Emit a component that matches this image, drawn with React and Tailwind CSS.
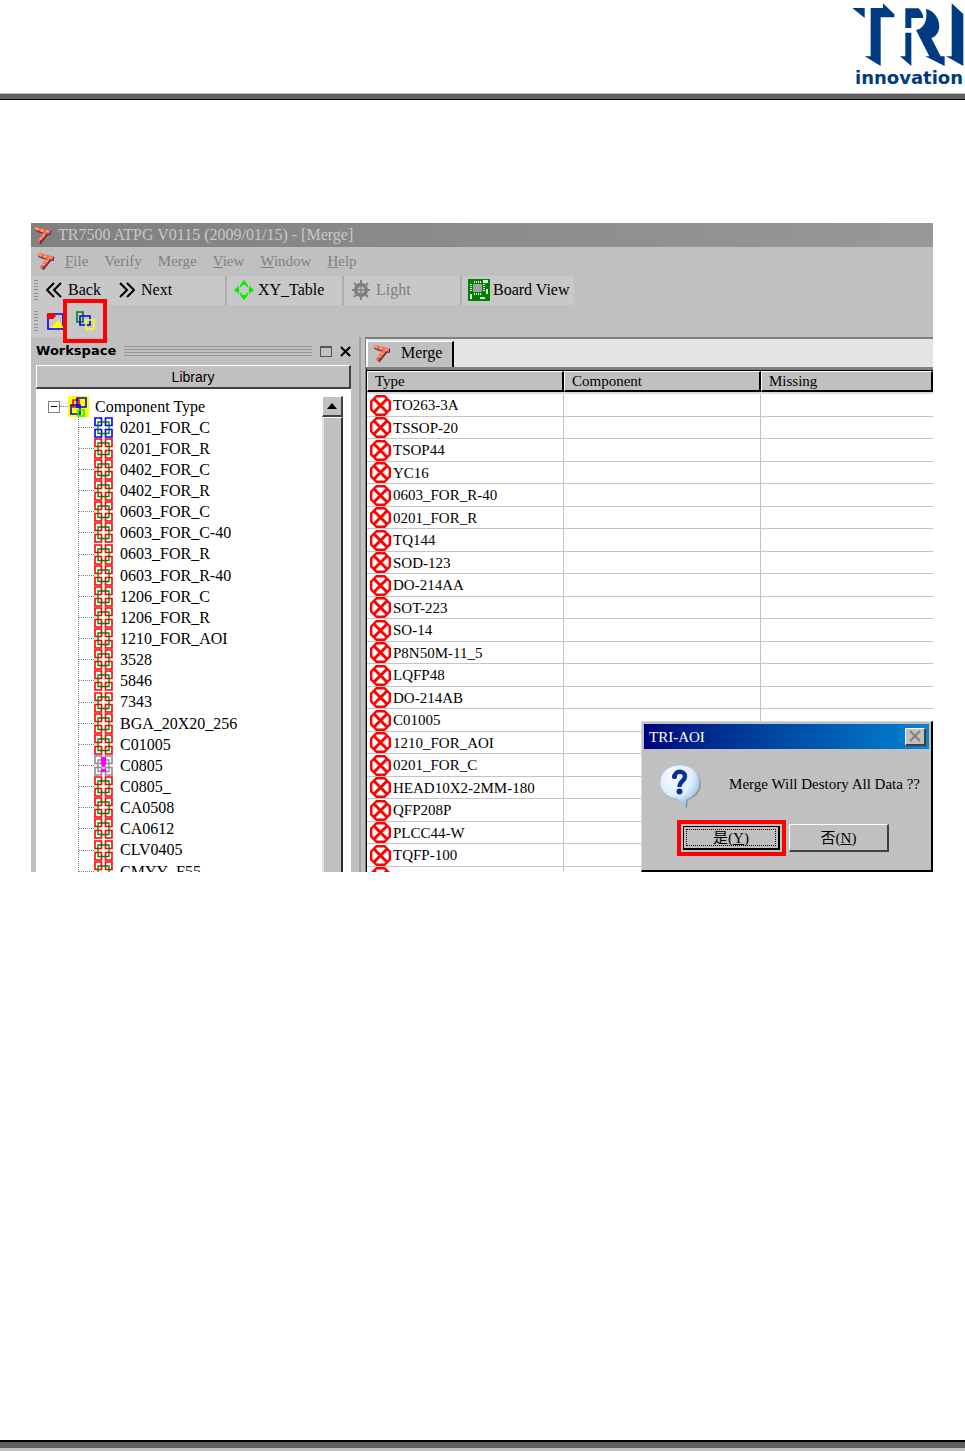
import React from "react";

const SERIF = "font-['Liberation_Serif','Noto_Sans_CJK_TC',serif]";

const TREE = [
  "0201_FOR_C", "0201_FOR_R", "0402_FOR_C", "0402_FOR_R", "0603_FOR_C", "0603_FOR_C-40",
  "0603_FOR_R", "0603_FOR_R-40", "1206_FOR_C", "1206_FOR_R", "1210_FOR_AOI", "3528", "5846",
  "7343", "BGA_20X20_256", "C01005", "C0805", "C0805_", "CA0508", "CA0612", "CLV0405", "CMYY_F55",
];

const ROWS = [
  "TO263-3A", "TSSOP-20", "TSOP44", "YC16", "0603_FOR_R-40", "0201_FOR_R", "TQ144", "SOD-123",
  "DO-214AA", "SOT-223", "SO-14", "P8N50M-11_5", "LQFP48", "DO-214AB", "C01005", "1210_FOR_AOI",
  "0201_FOR_C", "HEAD10X2-2MM-180", "QFP208P", "PLCC44-W", "TQFP-100", "SOT-26-3",
];

function Logo() {
  return (
    <div className="flex w-[117px] flex-col text-[#003a80]">
      <svg viewBox="0 0 351 204" className="h-[68px] w-[117px]" fill="currentColor" aria-hidden="true">
        <path d="M13 24H50V54Z" />
        <path d="M68 24H105V10L139 43V52H98V198L50 169H68Z" />
        <path d="M172 25H212Q225 38 226 54H190V84H172Z" />
        <path d="M234 26C260 34 274 56 274 80C272 100 262 110 250 114L278 169H290V198L232 169H244L204 90C226 86 240 64 234 26Z" />
        <path d="M172 98H190V198L156 169H172Z" />
        <path d="M311 10L346 42V198L294 169H311Z" />
      </svg>
      <span className="pl-[7px] font-['DejaVu_Sans',sans-serif] text-[18px] leading-5 font-bold">innovation</span>
    </div>
  );
}

function AppIcon() {
  return (
    <svg viewBox="0 0 20 20" className="size-5 shrink-0" fill="none" aria-hidden="true">
      <path d="M3 4L8 6L18 8M14 8L6 18" stroke="#5a3a3a" strokeWidth="4.2" />
      <path d="M2 3L7 5L17 7M13 7L5 17" stroke="#ff6a5e" strokeWidth="3.4" />
      <path d="M3 3L5 4M8 5L10 6M14 6L15 7M11 10L10 11M8 13L7 14" stroke="#ffc84a" strokeWidth="1.6" />
      <path d="M5 6L7 7M16 9H18M7 17L8 15" stroke="#7a2a7a" strokeWidth="1.2" />
    </svg>
  );
}

function ErrorIcon() {
  return (
    <svg viewBox="0 0 21 21" className="h-[21px] w-[21px] shrink-0" aria-hidden="true">
      <path d="M6.5 1.200H14.500L19.800 6.500V14.500L14.500 19.800H6.500L1.200 14.500V6.500Z" fill="#fff" stroke="#f00" strokeWidth="2.400" />
      <path d="M4 4L17 17M17 4L4 17" stroke="#f00" strokeWidth="3" />
    </svg>
  );
}

function PartIcon({ kind }) {
  const outer = kind === "blue" ? "#0000ff" : kind === "gray" ? "#8c8c8c" : "#ff0000";
  const inner = kind === "gray" ? "#8c8c8c" : "#008000";
  return (
    <svg viewBox="0 0 19 21" className="h-[21px] w-[19px] shrink-0" fill="none" strokeWidth="1.6" aria-hidden="true">
      <path d="M1 1H7.500V8.500H1ZM11.500 1H18V8.500H11.500ZM1 12.500H7.500V20H1ZM11.500 12.500H18V20H11.500Z" stroke={outer} />
      <path d="M4 5H15V16.500H4Z" stroke={inner} strokeWidth="1.300" />
      {kind === "gray" && <path d="M7 2H12V9L11 12H8L7 9ZM7 14H12V17H7Z" fill="#f0f" />}
    </svg>
  );
}

function RootIcon() {
  return (
    <svg viewBox="0 0 21 21" className="size-[21px] shrink-0" fill="none" strokeWidth="1.6" aria-hidden="true">
      <rect width="21" height="21" fill="#ff0" />
      <path d="M5 4H11V11H5Z" stroke="#f00" />
      <path d="M9 2H18V11H9ZM3 9H12V18H3Z" stroke="#00f" />
      <path d="M10 14H16V20H10Z" stroke="#0f0" />
    </svg>
  );
}

function Chevrons({ flip }) {
  return (
    <svg viewBox="0 0 16 16" className="size-4 shrink-0" fill="none" stroke="#000" strokeWidth="2" aria-hidden="true">
      <path d={flip ? "M1 1L8 8L1 15M8 1L15 8L8 15" : "M8 1L1 8L8 15M15 1L8 8L15 15"} />
    </svg>
  );
}

function MoveIcon() {
  return (
    <svg viewBox="0 0 20 20" className="size-5 shrink-0" fill="#00f000" aria-hidden="true">
      <path d="M10 0L14 5H6ZM10 20L6 15H14ZM0 10L5 6V14ZM20 10L15 14V6Z" />
      <path d="M6 7L8 5M14 7L12 5M6 13L8 15M14 13L12 15" stroke="#00f000" strokeWidth="1.5" />
    </svg>
  );
}

function LightIcon() {
  return (
    <svg viewBox="0 0 20 20" className="size-5 shrink-0" aria-hidden="true">
      <path d="M10 0V20M1 10H19M3 3L17 17M17 3L3 17" stroke="#808080" strokeWidth="2" />
      <circle cx="10" cy="10" r="5.2" fill="#c8c8c8" stroke="#808080" strokeWidth="4" />
      <path d="M10 7V13M7 10H13" stroke="#808080" strokeWidth="1.4" />
    </svg>
  );
}

function BoardIcon() {
  return (
    <svg viewBox="0 0 22 22" className="h-[22px] w-[22px] shrink-0" aria-hidden="true">
      <rect width="22" height="22" fill="#008000" />
      <path d="M6.500 2V16M8.500 2V16M10.500 2V16M12.500 2V16M2 5.500H17M2 7.500H17M2 9.500H17M2 11.500H17" stroke="#e8e8e8" />
      <rect x="4" y="4" width="11" height="10" fill="#008000" />
      <rect x="5" y="5" width="9" height="8" fill="#a0a0a0" />
      <path d="M15 1H20V4H15ZM18 10H20V15H18ZM2 15H4V20H2ZM12 18H17V20H12Z" fill="#e8e8e8" />
    </svg>
  );
}

function QuestionIcon() {
  return (
    <svg viewBox="0 0 42 44" className="h-[44px] w-[42px] shrink-0" aria-hidden="true">
      <defs>
        <radialGradient id="bubble" cx="40%" cy="30%" r="75%">
          <stop offset="0" stopColor="#ffffff" />
          <stop offset="0.6" stopColor="#dcebfb" />
          <stop offset="1" stopColor="#86b2e2" />
        </radialGradient>
      </defs>
      <path d="M23 3C34 3 42 10 42 20C42 28 36 34 29 36L28 44L19 36C8 35 2 28 2 21C2 9 11 3 23 3Z" fill="#80848c" opacity=".7" />
      <path d="M21 1C32 1 40 8 40 18C40 27 34 33 27 35L26 42L18 35C8 34 1 27 1 18C1 8 10 1 21 1Z" fill="url(#bubble)" stroke="#b4cce6" />
      <path d="M15.500 13C15.500 6 26 6 26 12.500C26 17 20.500 17 20.500 23" fill="none" stroke="#0a2f9a" strokeWidth="4.400" />
      <circle cx="15.500" cy="12.500" r="2.600" fill="#0a2f9a" />
      <circle cx="20.500" cy="27.500" r="3" fill="#0a2f9a" />
    </svg>
  );
}

function Grip() {
  return (
    <span className="flex h-5 w-1 shrink-0 flex-col justify-between">
      {Array.from({ length: 7 }, (_, i) => (
        <span key={i} className="h-px bg-[#909090]" />
      ))}
    </span>
  );
}

const raised = "border border-t-white border-l-white border-r-[#404040] border-b-[#404040] bg-[#c0c0c0]";

function MenuBar() {
  const items = [["F", "ile"], ["", "Verify"], ["", "Merge"], ["V", "iew"], ["W", "indow"], ["H", "elp"]];
  return (
    <nav className="flex h-7 items-center gap-[9px] pl-[5px] text-[15px] text-[#808080]">
      <AppIcon />
      <div className="flex gap-4">
        {items.map(([key, rest]) => (
          <button key={key + rest} type="button" className="whitespace-nowrap">
            {key && <u>{key}</u>}
            {rest}
          </button>
        ))}
      </div>
    </nav>
  );
}

function ToolBars() {
  return (
    <div>
      <div className="flex h-[30px] items-center">
        <div className="flex h-[29px] w-[194px] items-center bg-[#c8c8c8] pl-[3px]">
          <Grip />
          <button type="button" className="ml-2 flex w-[73px] items-center gap-[6px]"><Chevrons />Back</button>
          <button type="button" className="flex items-center gap-[6px]"><Chevrons flip />Next</button>
        </div>
        <button type="button" className="flex h-[29px] w-[117px] items-center gap-1 border-l-2 border-[#adadad] bg-[#c8c8c8] pl-[7px] whitespace-nowrap">
          <MoveIcon />XY_Table
        </button>
        <button type="button" className="flex h-[29px] w-[118px] items-center gap-[5px] border-l-2 border-[#adadad] bg-[#c8c8c8] pl-[7px] text-[#808080]">
          <LightIcon />Light
        </button>
        <button type="button" className="flex h-[29px] w-[114px] items-center gap-[3px] border-l-2 border-[#adadad] bg-[#c8c8c8] pl-[6px] whitespace-nowrap">
          <BoardIcon />Board View
        </button>
      </div>
      <div className="flex h-8 w-[74px] items-center bg-[#c8c8c8] pl-[3px]">
        <Grip />
        <button type="button" aria-label="Picture" className="ml-2">
          <svg viewBox="0 0 18 18" className="size-[18px]" aria-hidden="true">
            <path d="M2 2H17V17H2Z" fill="none" stroke="#00f" strokeWidth="1.600" />
            <path d="M5 16L12 8L18 16Z" fill="#ff0" />
            <path d="M0 4L3 1H7L10 4L7 7H3Z" fill="#f00" />
          </svg>
        </button>
        <button type="button" aria-label="Merge libraries" className="relative ml-[11px] size-5">
          <svg viewBox="0 0 20 20" className="size-5" fill="none" strokeWidth="1.600" aria-hidden="true">
            <path d="M2 1H8V11H2Z" stroke="#008000" />
            <path d="M5 5H15V14H5Z" stroke="#00f" />
            <path d="M11 9H19V18H11Z" stroke="#ff0" />
          </svg>
          <span className="absolute -inset-3 z-10 border-4 border-[#f00]" />
        </button>
      </div>
    </div>
  );
}

function Workspace() {
  return (
    <aside className="flex w-[328px] shrink-0 flex-col pr-2 pl-[5px]">
      <div className="flex h-[28px] shrink-0 items-center">
        <h2 className="font-['DejaVu_Sans',sans-serif] text-[13px] leading-4 font-bold">Workspace</h2>
        <div className="mx-2 h-[10px] flex-1 border-y border-[#999] py-[2px]">
          <div className="h-full border-y border-[#999]" />
        </div>
        <button type="button" aria-label="Float" className="h-[11px] w-3 border border-t-2 border-[#555]" />
        <button type="button" aria-label="Close" className="ml-2">
          <svg viewBox="0 0 12 12" className="size-[11px]" stroke="#000" strokeWidth="2.200" aria-hidden="true">
            <path d="M1 1L11 11M11 1L1 11" />
          </svg>
        </button>
      </div>
      <button type="button" className={`${raised} h-6 shrink-0 border-r-2 border-b-2 font-['Liberation_Sans',sans-serif] text-sm`}>Library</button>
      <div className="flex min-h-0 flex-1 bg-white pt-[7px]">
        <div className="min-w-0 flex-1 pl-3">
          <div className="flex h-[21px] items-center">
            <button type="button" aria-label="Collapse" className="flex size-3 items-center justify-center border border-[#808080]">
              <span className="h-px w-[6px] bg-black" />
            </button>
            <span className="w-2 border-t border-dotted border-[#808080]" />
            <RootIcon />
            <span className="ml-[6px] whitespace-nowrap">Component Type</span>
          </div>
          <ul className="ml-[30px] border-l border-dotted border-[#808080]">
            {TREE.map((name) => (
              <li key={name} className="flex h-[21px] items-center nth-[7n]:h-[22px]">
                <span className="w-[15px] border-t border-dotted border-[#808080]" />
                <PartIcon kind={name === "0201_FOR_C" ? "blue" : name === "C0805" ? "gray" : "red"} />
                <span className="ml-[7px] whitespace-nowrap">{name}</span>
              </li>
            ))}
          </ul>
        </div>
        <div className="mr-2 flex w-[21px] flex-col">
          <button type="button" aria-label="Scroll up" className={`${raised} flex h-[21px] items-center justify-center border-r-2 border-b-2`}>
            <svg viewBox="0 0 10 6" className="h-[6px] w-[10px]" aria-hidden="true"><path d="M5 0L10 6H0Z" /></svg>
          </button>
          <div className="flex-1 border-t border-r-2 border-l-2 border-t-white border-r-[#303030] border-l-[#e4e4e4] bg-[#c0c0c0]" />
        </div>
      </div>
    </aside>
  );
}

function MergeTable() {
  const head = "border-t border-r-2 border-b-2 border-l border-t-white border-l-white border-r-black border-b-black p-0 pl-[7px] text-left font-normal";
  return (
    <main className="flex min-w-0 flex-1 flex-col border-l-2 border-[#a0a0a0]">
      <div className="ml-1 flex min-h-0 flex-1 flex-col border-t-2 border-l border-[#808080]">
        <div className="flex h-7 shrink-0 items-end border-l-2 border-white bg-[#e4e4e4]">
          <button type="button" className="flex h-[26px] items-center gap-[9px] border-t border-r-2 border-t-white border-r-black bg-[#c0c0c0] pr-[10px] pb-1 pl-1">
            <AppIcon />Merge
          </button>
        </div>
        <div className="min-h-0 flex-1 overflow-hidden border-t-[3px] border-l border-t-[#808080] border-l-black bg-white">
          <table className="w-full table-fixed border-separate border-spacing-0 border-t border-black text-[15px] leading-[18px]">
            <colgroup>
              <col className="w-[197px]" />
              <col className="w-[197px]" />
              <col />
            </colgroup>
            <thead>
              <tr className="h-[21px] bg-[#c0c0c0]">
                <th className={head}>Type</th>
                <th className={head}>Component</th>
                <th className={head}>Missing</th>
              </tr>
            </thead>
            <tbody>
              <tr className="h-[2px] bg-[#dcd8dc]"><td colSpan={3} className="p-0" /></tr>
              {ROWS.map((name) => (
                <tr key={name} className="h-[22px] even:h-[23px]">
                  <td className="border-r border-b border-[#c4c4c4] p-0 pl-[3px]">
                    <div className="flex h-[21px] items-center gap-[2px]"><ErrorIcon />{name}</div>
                  </td>
                  <td className="border-r border-b border-[#c4c4c4] p-0" />
                  <td className="border-b border-[#c4c4c4] p-0" />
                </tr>
              ))}
            </tbody>
          </table>
        </div>
      </div>
    </main>
  );
}

function Dialog() {
  return (
    <section role="dialog" aria-labelledby="dialog-title" className="absolute right-0 bottom-0 h-[151px] w-[292px] border border-r-2 border-b-2 border-[#d8d8d8] border-r-black border-b-black bg-[#c0c0c0] p-[2px] text-[15px]">
      <div className="flex h-[25px] items-center justify-between bg-linear-to-r from-[#00007c] to-[#1084d0] pr-[3px] pl-[5px] text-white">
        <h2 id="dialog-title">TRI-AOI</h2>
        <button type="button" aria-label="Close" className={`${raised} flex h-[18px] w-[21px] items-center justify-center border-r-2 border-b-2`}>
          <svg viewBox="0 0 12 12" className="size-3" stroke="#808080" strokeWidth="2" aria-hidden="true"><path d="M1 1L11 11M11 1L1 11" /></svg>
        </button>
      </div>
      <div className="flex items-start justify-between pt-[15px] pr-[9px] pl-[15px]">
        <QuestionIcon />
        <p className="pt-[10px] leading-5 whitespace-nowrap">Merge Will Destory All Data ??</p>
      </div>
      <div className="flex gap-[3px] pt-3 pl-[33px]">
        <button type="button" className="h-9 w-[109px] border-4 border-[#f00] p-[2px]">
          <span className="flex h-full items-center justify-center border border-r-2 border-b-2 border-black bg-[#c0c0c0] p-[2px]">
            <span className="flex h-full w-full items-center justify-center border border-dotted border-black leading-4">是(<u>Y</u>)</span>
          </span>
        </button>
        <button type="button" className={`${raised} mt-1 h-7 w-[100px] border-r-2 border-b-2 leading-4`}>否(<u>N</u>)</button>
      </div>
    </section>
  );
}

export default function App() {
  return (
    <div className={`flex min-h-screen flex-col bg-white text-base leading-5 text-black ${SERIF}`}>
      <header className="flex flex-col">
        <div className="flex h-[93px] items-start justify-end"><Logo /></div>
        <div className="h-[7px] border-t border-b border-t-[#c0c0c0] border-b-black bg-[#606060]" />
      </header>
      <section className="relative mt-[123px] mr-8 ml-[31px] flex h-[649px] flex-col overflow-hidden bg-[#c0c0c0]">
        <div className="flex h-6 shrink-0 items-center gap-[5px] bg-linear-to-r from-[#808080] to-[#989898] pl-[2px] text-[#c8c8c8]">
          <AppIcon />
          <h1 className="whitespace-nowrap">TR7500 ATPG V0115 (2009/01/15) - [Merge]</h1>
        </div>
        <MenuBar />
        <ToolBars />
        <div className="flex min-h-0 flex-1">
          <Workspace />
          <MergeTable />
        </div>
        <Dialog />
      </section>
      <footer className="mt-auto h-[11px] border-t-2 border-b-[3px] border-t-black border-b-[#c0c0c0] bg-[#606060]" />
    </div>
  );
}
